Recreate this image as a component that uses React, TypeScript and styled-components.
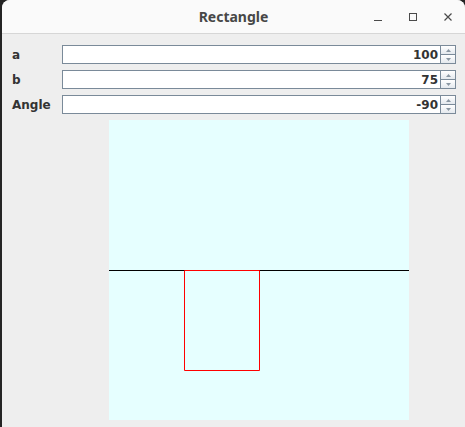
import { FC } from 'react';
import styled, { createGlobalStyle } from 'styled-components';

const GlobalStyle = createGlobalStyle`
  html, body {
    margin: 0;
    padding: 0;
    background: #242424;
  }
  #root {
    width: 465px;
    height: 427px;
    overflow: hidden;
  }
`;

const Window = styled.div`
  margin-left: 2px;
  width: 463px;
  height: 427px;
  display: flex;
  flex-direction: column;
  background: #eeeeee;
  border-radius: 8px 8px 0 0;
  overflow: hidden;
`;

const TitleBar = styled.header`
  flex: 0 0 33px;
  position: relative;
  display: flex;
  align-items: center;
  justify-content: center;
  background: #fafafa;
  border-bottom: 1px solid #d6d6d6;
  font-family: 'Noto Sans', 'DejaVu Sans', sans-serif;
  font-weight: bold;
  font-size: 14px;
  color: #474747;
`;

const Controls = styled.div`
  position: absolute;
  right: 0;
  top: 0;
  height: 33px;
  display: flex;
  align-items: center;
`;

const CtrlButton = styled.span`
  width: 35px;
  height: 33px;
  display: flex;
  align-items: center;
  justify-content: center;
  color: #4a4a4a;
`;

const Form = styled.div`
  flex: 1;
  display: grid;
  grid-template-columns: 50px 1fr;
  grid-auto-rows: min-content;
  row-gap: 6px;
  padding: 11px 9px 0 10px;
  font-family: 'DejaVu Sans', sans-serif;
  font-weight: bold;
  font-size: 12px;
  color: #333333;
`;

const Label = styled.label`
  display: flex;
  align-items: center;
  height: 19px;
`;

const Spinner = styled.div`
  display: flex;
  height: 19px;
`;

const Field = styled.div`
  flex: 1;
  box-sizing: border-box;
  height: 19px;
  border: 1px solid #7a8a99;
  background: #ffffff;
  display: flex;
  align-items: center;
  justify-content: flex-end;
  padding-right: 2px;
  line-height: 1;
`;

const Arrows = styled.div`
  flex: 0 0 15px;
  display: flex;
  flex-direction: column;
`;

const ArrowButton = styled.div<{ $down?: boolean }>`
  flex: 1;
  box-sizing: border-box;
  border: 1px solid #7a8a99;
  border-left: none;
  border-top: ${(p) => (p.$down ? 'none' : '1px solid #7a8a99')};
  background: linear-gradient(#ffffff, #e4e9ee);
  display: flex;
  align-items: center;
  justify-content: center;
`;

const CanvasCell = styled.div`
  grid-column: 2;
  display: flex;
  justify-content: center;
`;

const Canvas = styled.div`
  width: 300px;
  height: 300px;
  background: #e6ffff;
`;

interface IProps {
  label: string;
  value: number;
}

const Arrow: FC<{ down?: boolean }> = ({ down }) => (
  <svg width="5" height="3" viewBox="0 0 5 3">
    <path d={down ? 'M0 0 H5 L2.5 3 Z' : 'M0 3 H5 L2.5 0 Z'} fill="#8a97a3" />
  </svg>
);

const SpinnerRow: FC<IProps> = ({ label, value }) => (
  <>
    <Label>{label}</Label>
    <Spinner>
      <Field>{value}</Field>
      <Arrows>
        <ArrowButton>
          <Arrow />
        </ArrowButton>
        <ArrowButton $down>
          <Arrow down />
        </ArrowButton>
      </Arrows>
    </Spinner>
  </>
);

const App: FC = () => {
  const a = 100;
  const b = 75;
  const angle = -90;

  // rectangle with one corner at the canvas centre, rotated in screen coords (y down)
  const rad = (-angle * Math.PI) / 180;
  const pts = [
    [0, 0],
    [a, 0],
    [a, b],
    [0, b],
  ].map(([x, y]) => {
    const rx = x * Math.cos(rad) - y * Math.sin(rad);
    const ry = x * Math.sin(rad) + y * Math.cos(rad);
    return `${(150 + rx).toFixed(1)},${(150 + ry).toFixed(1)}`;
  });

  return (
    <>
      <GlobalStyle />
      <Window>
        <TitleBar>
          Rectangle
          <Controls>
            <CtrlButton>
              <svg width="10" height="10" viewBox="0 0 10 10">
                <path d="M1 8.5 H9" stroke="currentColor" strokeWidth="1" />
              </svg>
            </CtrlButton>
            <CtrlButton>
              <svg width="10" height="10" viewBox="0 0 10 10">
                <rect x="1.5" y="1.5" width="7" height="7" fill="none" stroke="currentColor" strokeWidth="1" />
              </svg>
            </CtrlButton>
            <CtrlButton>
              <svg width="10" height="10" viewBox="0 0 10 10">
                <path d="M1.5 1.5 L8.5 8.5 M8.5 1.5 L1.5 8.5" stroke="currentColor" strokeWidth="1.2" />
              </svg>
            </CtrlButton>
          </Controls>
        </TitleBar>

        <Form>
          <SpinnerRow label="a" value={a} />
          <SpinnerRow label="b" value={b} />
          <SpinnerRow label="Angle" value={angle} />
          <CanvasCell>
            <Canvas>
              <svg width="300" height="300" viewBox="0 0 300 300">
                <line x1="0" y1="150.5" x2="300" y2="150.5" stroke="#000" strokeWidth="1" />
                <polygon
                  points={pts.join(' ')}
                  transform="translate(0.5 0.5)"
                  fill="none"
                  stroke="#ff0000"
                  strokeWidth="1"
                />
              </svg>
            </Canvas>
          </CanvasCell>
        </Form>
      </Window>
    </>
  );
};

export default App;
